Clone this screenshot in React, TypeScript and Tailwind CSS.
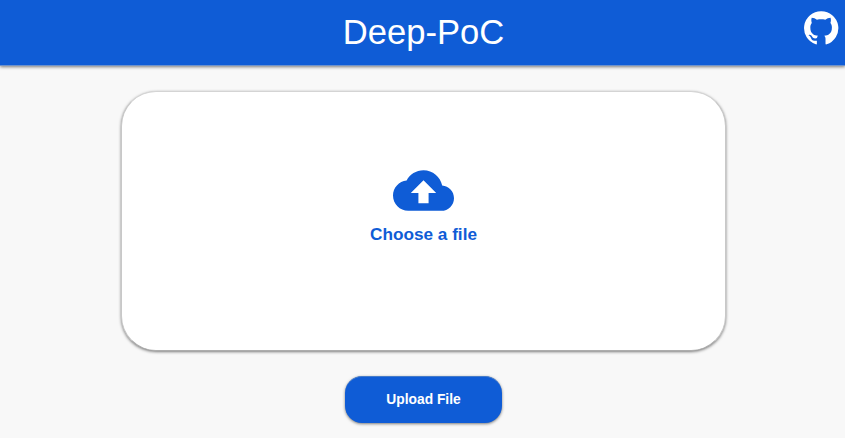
import React from "react";

export default function App() {
  return (
    <div className="flex h-[438px] w-full flex-col items-center overflow-hidden bg-[#f8f8f8] font-['Liberation_Sans',Arial,sans-serif]">
      <header className="grid h-[66px] w-full shrink-0 grid-cols-[1fr_auto_1fr] border-b border-[#6f92ca] bg-[#0f5cd6] pl-[2px] text-white shadow-[0_1px_3px_rgba(0,0,0,0.5)]">
        <h1 className="col-start-2 pt-[11px] text-[34.6px] leading-[42px]">Deep-PoC</h1>
        <a href="#" aria-label="GitHub" className="mt-[9px] mr-[6px] h-[37px] justify-self-end">
          <svg viewBox="-0.4 -0.2 24 24" className="h-[37px] w-[37px]" fill="currentColor">
            <path d="M12 1.27a11 11 0 00-3.48 21.46c.55.09.73-.1.73-.35v-2.04c-3.03.64-3.67-1.46-3.67-1.46-.55-1.29-1.28-1.65-1.28-1.65-.92-.65.1-.65.1-.65 1.1 0 1.73 1.1 1.73 1.1.92 1.65 2.57 1.2 3.21.92a2 2 0 01.64-1.47C7.4 16.9 5 15.9 5 11.8c0-1.2.3-2.2.95-3-.4-1.1-.4-2.3-.05-3.4 1.2 0 2.4.6 3.4 1.4 1.8-.4 3.6-.4 5.4 0 1-.8 2.2-1.4 3.4-1.4.35 1.1.35 2.3-.05 3.4.65.8.95 1.8.95 3 0 4.1-2.4 5.1-4.98 5.33.45.37.83.92.83 2.02v3.23c0 .25.1.44.73.35A11 11 0 0012 1.27" />
          </svg>
        </a>
      </header>
      <label className="mt-[25px] ml-[2px] flex h-[260px] w-[605px] shrink-0 cursor-pointer flex-col items-center rounded-[35px] border border-[#c8c8c8] border-t-[#d4d4d4] border-b-[#adadad] bg-white pt-[68px] text-[#0f5cd6] shadow-[0_1px_3px_rgba(0,0,0,0.5)]">
        <svg viewBox="0 0 24 24" className="h-[61px] w-[61px]" fill="currentColor">
          <path d="M19.35 10.04C18.67 6.59 15.64 4 12 4 9.11 4 6.6 5.64 5.35 8.04 2.34 8.36 0 10.91 0 14c0 3.31 2.69 6 6 6h13c2.76 0 5-2.24 5-5 0-2.64-2.05-4.78-4.65-4.96zM14 13v4h-4v-4H7l5-5 5 5h-3z" />
        </svg>
        <span className="mt-[3px] text-[17.2px] leading-5 font-bold">Choose a file</span>
      </label>
      <button className="mt-[25px] ml-[2px] h-[47px] w-[157px] shrink-0 rounded-[17px] border-t border-[#457bc9] bg-[#0f5cd6] text-[13.8px] font-bold text-white shadow-[0_1px_3px_rgba(0,0,0,0.5)]">Upload File</button>
    </div>
  );
}
